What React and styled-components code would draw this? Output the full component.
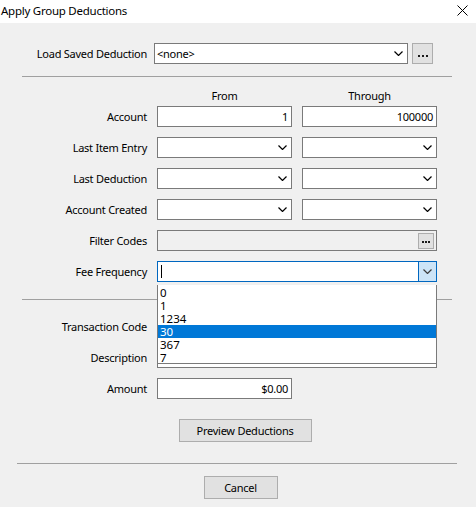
import React from "react";
import styled, { createGlobalStyle } from "styled-components";

const Global = createGlobalStyle`
  html, body { margin: 0; padding: 0; background: #f0f0f0; }
  body {
    font-family: "Noto Sans", "Open Sans", sans-serif;
    font-size: 11px;
    letter-spacing: -0.25px;
    color: #000;
  }
  * { box-sizing: border-box; }
`;

const Window = styled.div`
  width: 476px;
  height: 507px;
  background: #f0f0f0;
  display: flex;
  flex-direction: column;
  position: relative;
  overflow: hidden;
`;

const TitleBar = styled.div`
  height: 23px;
  background: #ffffff;
  display: flex;
  align-items: center;
  justify-content: space-between;
  padding: 0 8px 2px 1px;
  font-size: 11.5px;
`;

const Content = styled.div`
  display: flex;
  flex-direction: column;
  padding-top: 20px;
  position: relative;
`;

const LoadRow = styled.div`
  display: grid;
  grid-template-columns: 147px 257px 21px;
  column-gap: 4px;
  height: 21px;
  align-items: center;
  & > :nth-child(2) { margin-left: 3px; }
`;

const Label = styled.div`
  text-align: right;
  white-space: nowrap;
  line-height: 15px;
`;

const Separator = styled.div`
  height: 1px;
  background: #a0a0a0;
  margin: ${(p) => p.$margin};
`;

const Grid = styled.div`
  display: grid;
  grid-template-columns: 147px 135px 135px;
  column-gap: 10px;
  row-gap: 10px;
  grid-auto-rows: 21px;
  align-items: center;
  margin-top: ${(p) => p.$top || "0"};
`;

const Header = styled.div`
  display: grid;
  grid-template-columns: 147px 135px 135px;
  column-gap: 10px;
  height: 15px;
  line-height: 15px;
  margin: 11px 0 3px;
  & > div { text-align: center; }
`;

const Field = styled.div`
  height: 21px;
  border: 1px solid ${(p) => (p.$focus ? "#0067c0" : "#7a7a7a")};
  background: ${(p) => (p.$disabled ? "#f0f0f0" : "#ffffff")};
  display: flex;
  align-items: center;
  justify-content: ${(p) => (p.$right ? "flex-end" : "flex-start")};
  padding: ${(p) => (p.$right ? "0 3px 0 0" : "0 0 0 2px")};
  line-height: 15px;
  white-space: nowrap;
  position: relative;
  grid-column: ${(p) => p.$span || "auto"};
`;

const Value = styled.span`
  flex: 1;
`;

const ArrowBox = styled.div`
  width: 18px;
  align-self: stretch;
  display: flex;
  align-items: center;
  justify-content: center;
  background: ${(p) => (p.$active ? "#cce4f7" : "transparent")};
  border-left: ${(p) => (p.$active ? "1px solid #0067c0" : "none")};
`;

const MoreButton = styled.div`
  width: ${(p) => p.$size}px;
  height: ${(p) => p.$size}px;
  background: #e1e1e1;
  border: 1px solid #adadad;
  display: flex;
  align-items: flex-end;
  justify-content: center;
  padding-bottom: ${(p) => (p.$size > 18 ? "6px" : "5px")};
  margin-left: auto;
  margin-right: ${(p) => (p.$inset ? "2px" : "0")};
`;

const Caret = styled.span`
  width: 1px;
  height: 13px;
  background: #000;
  margin-left: 1px;
`;

const Actions = styled.div`
  display: flex;
  justify-content: center;
  padding-left: ${(p) => p.$shift || "0"};
  margin-top: ${(p) => p.$top || "0"};
`;

const Button = styled.div`
  width: ${(p) => p.$w}px;
  height: 23px;
  background: #e1e1e1;
  border: 1px solid #adadad;
  display: flex;
  align-items: center;
  justify-content: center;
  line-height: 15px;
`;

const DropList = styled.div`
  position: absolute;
  left: 157px;
  top: 262px;
  width: 280px;
  height: 79px;
  background: #ffffff;
  border: 1px solid #7a7a7a;
  border-top: none;
  padding-top: 1px;
  z-index: 2;
`;

const Option = styled.div`
  height: 13px;
  line-height: 13px;
  font-size: 11.5px;
  letter-spacing: 0;
  padding-left: 2px;
  background: ${(p) => (p.$selected ? "#0078d7" : "transparent")};
  color: ${(p) => (p.$selected ? "#ffffff" : "#000000")};
`;

const Chevron = ({ color = "#000" }) => (
  <svg width="9" height="5" viewBox="0 0 9 5">
    <path d="M0.5 0.5 L4.5 4.5 L8.5 0.5" fill="none" stroke={color} strokeWidth="1.2" />
  </svg>
);

// Three-dot glyph for the browse buttons
const Dots = ({ size = 2, gap = 2 }) => (
  <svg width={size * 3 + gap * 2} height={size} viewBox={`0 0 ${size * 3 + gap * 2} ${size}`}>
    {[0, 1, 2].map((i) => (
      <rect key={i} x={i * (size + gap)} y="0" width={size} height={size} fill="#1a1a1a" />
    ))}
  </svg>
);

const Combo = ({ value }) => (
  <Field>
    <Value>{value}</Value>
    <ArrowBox>
      <Chevron />
    </ArrowBox>
  </Field>
);

const rows = ["Last Item Entry", "Last Deduction", "Account Created"];
const options = ["0", "1", "1234", "30", "367", "7"];

export default function App() {
  return (
    <Window>
      <Global />
      <TitleBar>
        <span>Apply Group Deductions</span>
        <svg width="11" height="11" viewBox="0 0 11 11">
          <path d="M0.5 0.5 L10.5 10.5 M10.5 0.5 L0.5 10.5" stroke="#000" strokeWidth="1" />
        </svg>
      </TitleBar>

      <Content>
        <LoadRow>
          <Label>Load Saved Deduction</Label>
          <Combo value="<none>" />
          <MoreButton $size={21}>
            <Dots size={2} gap={2} />
          </MoreButton>
        </LoadRow>

        <Separator $margin="12px 24px 0 22px" />

        <Header>
          <div />
          <div>From</div>
          <div>Through</div>
        </Header>

        <Grid>
          <Label>Account</Label>
          <Field $right>1</Field>
          <Field $right>100000</Field>

          {rows.map((r) => (
            <React.Fragment key={r}>
              <Label>{r}</Label>
              <Combo />
              <Combo />
            </React.Fragment>
          ))}

          <Label>Filter Codes</Label>
          <Field $disabled $span="2 / 4">
            <MoreButton $size={16} $inset>
              <Dots size={2} gap={1} />
            </MoreButton>
          </Field>

          <Label>Fee Frequency</Label>
          <Field $focus $span="2 / 4">
            <Caret />
            <Value />
            <ArrowBox $active>
              <Chevron color="#3c3c3c" />
            </ArrowBox>
          </Field>
        </Grid>

        <Separator $margin="17px 24px 0 22px" />

        <Grid $top="16px">
          <Label>Transaction Code</Label>
          <Field $span="2 / 4" />
          <Label>Description</Label>
          <Field $span="2 / 4" />
          <Label>Amount</Label>
          <Field $right>$0.00</Field>
        </Grid>

        <Actions $shift="14px" $top="20px">
          <Button $w={133}>Preview Deductions</Button>
        </Actions>

        <Separator $margin="21px 19px 0 17px" />

        <Actions $shift="5px" $top="12px">
          <Button $w={74}>Cancel</Button>
        </Actions>

        <DropList>
          {options.map((o) => (
            <Option key={o} $selected={o === "30"}>
              {o}
            </Option>
          ))}
        </DropList>
      </Content>
    </Window>
  );
}
